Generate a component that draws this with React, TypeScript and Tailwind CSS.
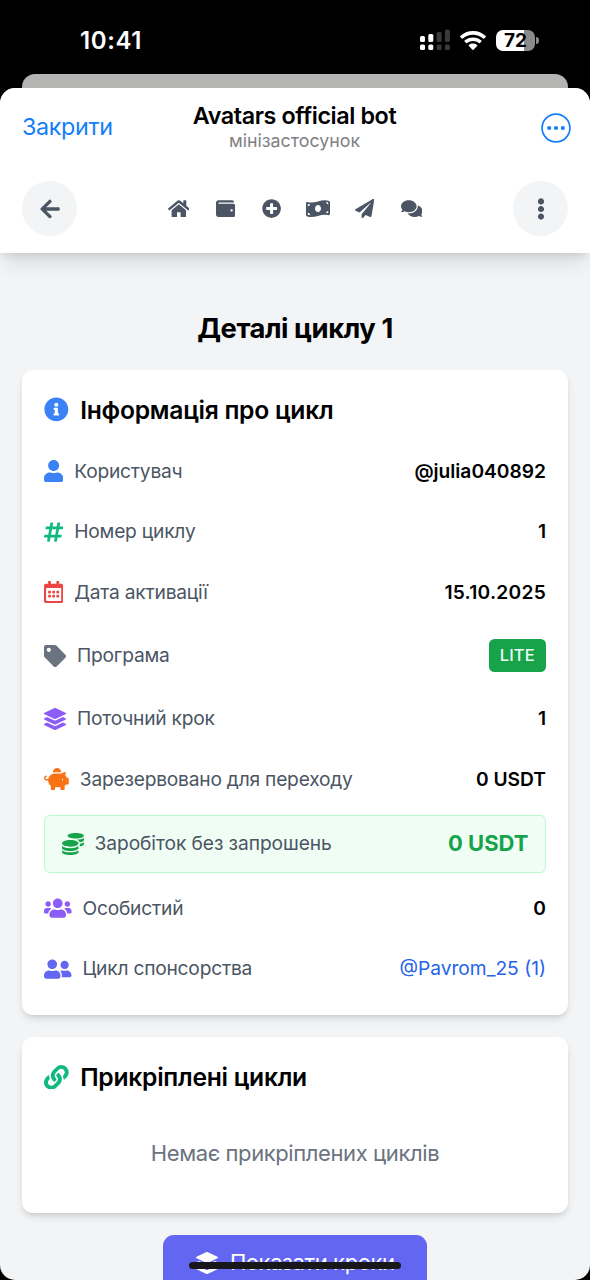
import type { ReactNode } from "react";
import {
  FaArrowLeft,
  FaCoins,
  FaComments,
  FaEllipsisV,
  FaHashtag,
  FaHome,
  FaInfoCircle,
  FaLayerGroup,
  FaLink,
  FaMoneyBillWave,
  FaPaperPlane,
  FaPiggyBank,
  FaPlusCircle,
  FaRegCalendarAlt,
  FaTag,
  FaUser,
  FaUserFriends,
  FaUsers,
  FaWallet,
} from "react-icons/fa";

const navIcons = [
  { Icon: FaHome, size: "w-[21.6px]" },
  { Icon: FaWallet, size: "w-[19.2px]" },
  { Icon: FaPlusCircle, size: "w-[19.2px]" },
  { Icon: FaMoneyBillWave, size: "w-[24px]" },
  { Icon: FaPaperPlane, size: "w-[19.2px]" },
  { Icon: FaComments, size: "w-[21.6px]" },
];

function StatusBar() {
  return (
    <div className="flex items-center justify-between h-[74px] pl-[80px] pr-[51.5px] pt-[7px]">
      <span className="text-white text-[24px] font-semibold tracking-[0.6px]">10:41</span>
      <div className="flex items-center -mt-[1px]">
        <svg className="w-[30px] h-[22px]" viewBox="0 0 30 22">
          <g fill="#fff">
            <rect x="0" y="7" width="5" height="6" rx="1.5" />
            <rect x="8.3" y="5" width="5" height="8" rx="1.5" />
            <rect x="0" y="15.5" width="5" height="5.5" rx="1.5" />
            <rect x="8.3" y="15.5" width="5" height="5.5" rx="1.5" />
          </g>
          <g fill="#3a3a3a">
            <rect x="16.6" y="3" width="5" height="10" rx="1.5" />
            <rect x="24.9" y="0.5" width="5" height="12.5" rx="1.5" />
            <rect x="16.6" y="15.5" width="5" height="5.5" rx="1.5" />
            <rect x="24.9" y="15.5" width="5" height="5.5" rx="1.5" />
          </g>
        </svg>
        <svg className="w-[26px] h-[19px] ml-[10px]" viewBox="0 0 26 19" fill="#fff">
          <path d="M13 0C8 0 3.5 1.9.3 5.1a.7.7 0 0 0 0 1l1.5 1.5a.7.7 0 0 0 1 0A14.8 14.8 0 0 1 13 3.7c3.9 0 7.5 1.5 10.2 3.9a.7.7 0 0 0 1 0l1.5-1.5a.7.7 0 0 0 0-1A18 18 0 0 0 13 0Z" />
          <path d="M13 6.4c-3.2 0-6.2 1.2-8.4 3.2a.7.7 0 0 0 0 1l1.5 1.5a.7.7 0 0 0 1 0A8.8 8.8 0 0 1 13 9.9c2.3 0 4.4.8 5.9 2.2a.7.7 0 0 0 1 0l1.5-1.5a.7.7 0 0 0 0-1A12.4 12.4 0 0 0 13 6.4Z" />
          <path d="M13 12.6c-1.6 0-3 .5-4.1 1.4a.7.7 0 0 0 0 1l3.6 3.7a.7.7 0 0 0 1 0l3.6-3.7a.7.7 0 0 0 0-1A6.6 6.6 0 0 0 13 12.6Z" />
        </svg>
        <div className="flex items-center ml-[10.5px]">
          <div className="flex items-center justify-center w-[39px] h-[21px] rounded-[7px] bg-linear-to-r from-white from-73% to-[#8a8a8a] to-73% text-black text-[19px] font-bold leading-none">
            72
          </div>
          <div className="w-[2.5px] h-[7px] ml-[1px] rounded-r-full bg-[#8a8a8a]" />
        </div>
      </div>
    </div>
  );
}

function Header() {
  return (
    <header className="bg-white h-[165px] shrink-0 rounded-t-[15px] px-[22px] shadow-[0_14px_20px_-4px_rgba(0,0,0,0.1),0_5px_8px_-3px_rgba(0,0,0,0.1)] z-10">
      <div className="flex items-center justify-between h-[78px] -mr-[3px]">
        <div className="flex-1 text-[23.3px] text-[#147efb] tracking-[-0.35px]">Закрити</div>
        <div className="flex flex-col items-center -mt-[2px] mr-[4px]">
          <h1 className="text-[23.3px] leading-[28px] font-semibold text-black tracking-[-0.4px]">
            Avatars official bot
          </h1>
          <p className="text-[17.8px] leading-[21px] text-[#808084]">мінізастосунок</p>
        </div>
        <div className="flex flex-1 justify-end pt-[1px]">
          <svg className="w-[30px] h-[30px]" viewBox="0 0 30 30">
            <circle cx="15" cy="15" r="13.9" fill="none" stroke="#147efb" strokeWidth="1.7" />
            <circle cx="8.2" cy="15" r="2.1" fill="#147efb" />
            <circle cx="15" cy="15" r="2.1" fill="#147efb" />
            <circle cx="21.8" cy="15" r="2.1" fill="#147efb" />
          </svg>
        </div>
      </div>
      <nav className="flex items-center justify-between mt-[15px] text-[#4b5563]">
        <button className="flex items-center justify-center size-[55px] rounded-full bg-gray-100">
          <FaArrowLeft className="size-[22px]" />
        </button>
        <div className="flex items-center gap-[22.6px] text-[19.2px]">
          {navIcons.map(({ Icon, size }, i) => (
            <span key={i} className="flex items-center justify-center w-[24px]">
              <Icon className={`${size} shrink-0`} />
            </span>
          ))}
        </div>
        <button className="flex items-center justify-center size-[55px] rounded-full bg-gray-100">
          <FaEllipsisV className="size-[22px]" />
        </button>
      </nav>
    </header>
  );
}

function Card({ children, className }: { children: ReactNode; className?: string }) {
  return (
    <section
      className={`bg-white rounded-[11px] p-[22px] shadow-[0_5px_8px_-1px_rgba(0,0,0,0.1),0_3px_5px_-2px_rgba(0,0,0,0.1)] ${className ?? ""}`}
    >
      {children}
    </section>
  );
}

function CardTitle({ icon, children }: { icon: ReactNode; children: ReactNode }) {
  return (
    <h2 className="flex items-center gap-[11.5px] h-[36px] text-[24.7px] font-semibold text-black tracking-[-0.28px]">
      {icon}
      <span className="pt-[1.5px]">{children}</span>
    </h2>
  );
}

function Row({ icon, label, children }: { icon: ReactNode; label: string; children: ReactNode }) {
  return (
    <div className="flex items-center justify-between py-[11px]">
      <div className="flex items-center gap-[11px] text-[22px]">
        {icon}
        <span className="text-[19.2px] leading-[27.4px] text-[#4b5563] tracking-[-0.22px]">{label}</span>
      </div>
      <div className="text-[19.2px] leading-[27.4px] font-semibold text-black">{children}</div>
    </div>
  );
}

export default function App() {
  return (
    <div className="h-[1280px] bg-black font-['Inter','Noto_Sans',sans-serif] overflow-hidden flex flex-col">
      <StatusBar />
      <div className="h-[14px] shrink-0 mx-[22px] rounded-t-[13px] bg-[#b4b4b3]" />
      <div className="flex-1 min-h-0 flex flex-col bg-[#f3f4f6] rounded-[15px] overflow-hidden">
        <Header />
        <main className="px-[22px] pt-[56px] flex flex-col">
          <h1 className="text-center text-[27.4px] leading-[38px] font-bold text-black tracking-[-0.45px]">
            Деталі циклу 1
          </h1>

          <Card className="mt-[22.5px] h-[645.5px]">
            <CardTitle icon={<FaInfoCircle className="size-[24.7px] text-[#3b82f6]" />}>
              Інформація про цикл
            </CardTitle>
            <div className="flex flex-col gap-[11.1px] mt-[19px]">
              <Row icon={<FaUser className="w-[19.25px] text-[#3b82f6]" />} label="Користувач">
                @julia040892
              </Row>
              <Row icon={<FaHashtag className="w-[19.25px] text-[#10b981]" />} label="Номер циклу">
                1
              </Row>
              <Row icon={<FaRegCalendarAlt className="w-[19.25px] text-[#ef4444]" />} label="Дата активації">
                <span className="tracking-[0.25px]">15.10.2025</span>
              </Row>
              <Row icon={<FaTag className="text-[#6b7280]" />} label="Програма">
                <div className="flex items-center h-[33px] px-[11px] rounded-[5.5px] bg-[#16a34a] text-[#f0fdf4] text-[16.5px] font-medium tracking-[0.2px]">
                  LITE
                </div>
              </Row>
              <Row icon={<FaLayerGroup className="text-[#8b5cf6]" />} label="Поточний крок">
                1
              </Row>
              <Row icon={<FaPiggyBank className="w-[24.75px] text-[#f97316]" />} label="Зарезервовано для переходу">
                0 USDT
              </Row>
              <div className="flex items-center justify-between h-[57.5px] px-[16.5px] rounded-[5.5px] border-[1.4px] border-[#bbf7d0] bg-[#f0fdf4]">
                <div className="flex items-center gap-[11px] text-[22px] text-[#16a34a]">
                  <FaCoins />
                  <span className="text-[19.2px] text-[#4b5563] tracking-[-0.08px]">Заробіток без запрошень</span>
                </div>
                <span className="text-[22px] font-bold text-[#16a34a]">0 USDT</span>
              </div>
              <Row icon={<FaUsers className="w-[27.5px] text-[#8b5cf6]" />} label="Особистий">
                0
              </Row>
              <Row icon={<FaUserFriends className="w-[27.5px] text-[#6366f1]" />} label="Цикл спонсорства">
                <a className="font-normal text-[#2563eb]">@Pavrom_25 (1)</a>
              </Row>
            </div>
          </Card>

          <Card className="mt-[22px] h-[176px]">
            <CardTitle icon={<FaLink className="size-[24.7px] text-[#10b981]" />}>Прикріплені цикли</CardTitle>
            <p className="mt-[42px] text-center text-[22px] leading-[33px] text-[#6b7280] tracking-[-0.4px]">
              Немає прикріплених циклів
            </p>
          </Card>

          <button className="mt-[22px] self-center flex items-center justify-center gap-[10.5px] w-[264px] h-[55px] shrink-0 rounded-[11px] bg-[#6366f1] text-white text-[22px] tracking-[-0.4px]">
            <FaLayerGroup className="w-[24px] h-[22px]" />
            Показати кроки
          </button>
        </main>
      </div>
      <div className="fixed left-[189px] top-[1262px] w-[212px] h-[7px] rounded-full bg-[#18181b]" />
    </div>
  );
}
